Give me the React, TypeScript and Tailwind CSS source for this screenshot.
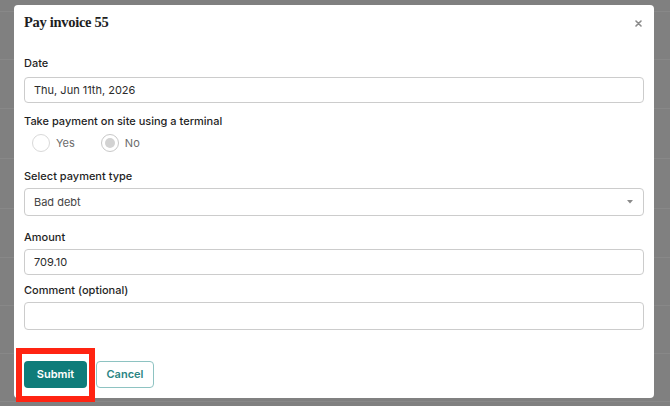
import React from "react";

const rows = [12, 48, 49, 50, 50, 49, 48, 48, 48];

function Radio({ label, checked }: { label: string; checked?: boolean }) {
  return (
    <div className="flex items-center gap-[6px]">
      <div
        className={
          "w-[18px] h-[18px] rounded-full border-[1.5px] bg-white flex items-center justify-center " +
          (checked ? "border-[#c8c8c8]" : "border-[#d9d9d9]")
        }
      >
        {checked && <div className="w-[10px] h-[10px] rounded-full bg-[#d2d2d2]" />}
      </div>
      <span className="text-[11px] leading-[16px] text-[#6b6b6b]">{label}</span>
    </div>
  );
}

function Label({ children }: { children: React.ReactNode }) {
  return <div className="text-[11px] leading-[16px] font-medium text-[#1f1f1f]">{children}</div>;
}

export default function App() {
  return (
    <div
      className="relative w-[670px] h-[406px] overflow-hidden bg-[#808080]"
      style={{ fontFamily: "Inter, 'Noto Sans', sans-serif" }}
    >
      <div className="flex flex-col">
        {rows.map((h, i) => (
          <div key={i} className="border-b border-[#888888]" style={{ height: h }} />
        ))}
      </div>

      <div className="absolute left-[14px] top-[5px] w-[640px] h-[393px] bg-white rounded-[4px] flex flex-col px-[10px]">
        <div className="h-[36px] flex items-center justify-between">
          <div
            className="text-[14.5px] font-bold text-[#1e1e1e] tracking-[-0.3px]"
            style={{ fontFamily: "'Liberation Serif', 'DejaVu Serif', serif" }}
          >
            Pay invoice 55
          </div>
          <svg width="7" height="7" viewBox="0 0 7 7" className="mr-[2px] mt-[1px]">
            <path d="M1 1L6 6M6 1L1 6" stroke="#8a8a8a" strokeWidth="1.6" strokeLinecap="round" />
          </svg>
        </div>

        <div className="pt-[14px] flex flex-col">
          <Label>Date</Label>
          <div className="mt-[6px] h-[26px] border border-[#cccccc] rounded-[4px] flex items-center px-[9px] text-[11px] text-[#2b2b2b]">
            Thu, Jun 11th, 2026
          </div>

          <div className="mt-[10px]">
            <Label>Take payment on site using a terminal</Label>
          </div>
          <div className="mt-[5px] ml-[8px] flex items-center gap-[26px]">
            <Radio label="Yes" />
            <Radio label="No" checked />
          </div>

          <div className="mt-[16px]">
            <Label>Select payment type</Label>
          </div>
          <div className="mt-[4px] h-[28px] border border-[#cccccc] rounded-[4px] flex items-center justify-between px-[9px] text-[11px] text-[#444444]">
            <span>Bad debt</span>
            <svg width="6" height="4" viewBox="0 0 6 4" className="mr-[1px]">
              <path d="M0 0H6L3 3.5Z" fill="#8a8a8a" />
            </svg>
          </div>

          <div className="mt-[13px]">
            <Label>Amount</Label>
          </div>
          <div className="mt-[4px] h-[26px] border border-[#cccccc] rounded-[4px] flex items-center px-[9px] text-[11px] text-[#2b2b2b]">
            709.10
          </div>

          <div className="mt-[7px]">
            <Label>Comment (optional)</Label>
          </div>
          <div className="mt-[4px] h-[28px] border border-[#cccccc] rounded-[4px]" />

          <div className="mt-[31px] flex items-center gap-[9px]">
            <button className="w-[63px] h-[27px] rounded-[4px] bg-[#0f7c7a] text-white text-[11px] font-semibold">
              Submit
            </button>
            <button className="w-[58px] h-[27px] rounded-[4px] border border-[#8ec3c2] bg-white text-[#2a8583] text-[11px] font-semibold">
              Cancel
            </button>
          </div>
        </div>
      </div>

      <div className="absolute left-[16px] top-[348px] w-[79px] h-[54px] border-[6px] border-[#ff2412]" />
    </div>
  );
}
